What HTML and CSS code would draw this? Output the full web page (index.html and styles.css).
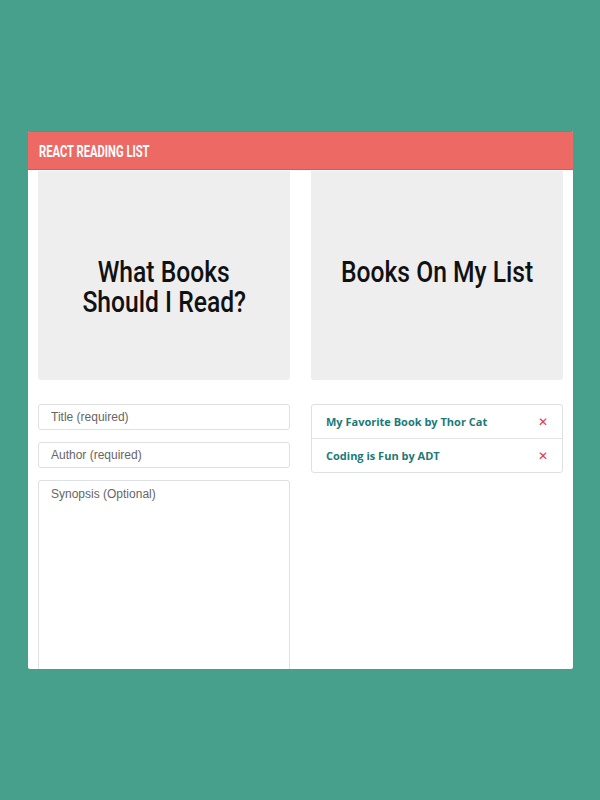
FILE: index.html
```html
<!DOCTYPE html>
<html>
<head>
<meta charset="utf-8">
<link rel="stylesheet" href="styles.css">
</head>
<body>
<div class="app">
  <header class="topbar"><span class="brand">REACT READING LIST</span></header>
  <div class="columns">
    <section class="col">
      <div class="hero"><h1><span>What Books</span><br><span>Should I Read?</span></h1></div>
      <form class="form">
        <input class="field" type="text" placeholder="Title (required)">
        <input class="field" type="text" placeholder="Author (required)">
        <textarea class="field area" placeholder="Synopsis (Optional)"></textarea>
      </form>
    </section>
    <section class="col">
      <div class="hero"><h1><span>Books On My List</span></h1></div>
      <ul class="list">
        <li class="item"><span>My Favorite Book by Thor Cat</span><span class="del">✕</span></li>
        <li class="item"><span>Coding is Fun by ADT</span><span class="del">✕</span></li>
      </ul>
    </section>
  </div>
</div>
</body>
</html>
```
FILE: styles.css
```css
html, body { margin: 0; padding: 0; }
body {
  background: #46a08c;
  height: 800px;
  overflow: hidden;
  font-family: "Liberation Sans", Arial, sans-serif;
}
.app {
  width: 545px;
  height: 538px;
  margin: 131px 0 0 28px;
  background: #fff;
  overflow: hidden;
  border-radius: 2px;
}
.topbar {
  height: 37px;
  background: #ec6964;
  border-top: 1px solid #e9524e;
  border-bottom: 1px solid #e9524e;
  padding-left: 11px;
}
.brand {
  display: inline-block;
  color: #fff;
  font-family: Roboto, "Liberation Sans", sans-serif;
  font-weight: bold;
  font-size: 16px;
  line-height: 40px;
  transform: scaleX(0.7);
  transform-origin: left center;
  white-space: nowrap;
}
.columns {
  display: grid;
  grid-template-columns: 252px 252px;
  column-gap: 21px;
  padding: 1px 10px 0;
}
.hero {
  box-sizing: border-box;
  height: 209px;
  background: #eeeeee;
  border-radius: 0 0 3px 3px;
  padding-top: 86px;
  margin-bottom: 24px;
}
.hero h1 {
  margin: 0;
  text-align: center;
  font-family: Roboto, "Liberation Sans", sans-serif;
  font-weight: 500;
  font-size: 29px;
  line-height: 30px;
  color: #111;
}
.hero h1 span {
  display: inline-block;
  transform: scaleX(0.85);
  white-space: nowrap;
}
.form {
  display: flex;
  flex-direction: column;
  gap: 12px;
  margin: 0;
}
.field {
  box-sizing: border-box;
  width: 252px;
  height: 26px;
  margin: 0;
  border: 1px solid #dfe0e4;
  border-radius: 3px;
  padding: 0 12px;
  font-family: "Liberation Sans", Arial, sans-serif;
  font-size: 12px;
  color: #555;
  outline: none;
  background: #fff;
}
.field::placeholder { color: #666; }
.area {
  height: 300px;
  padding-top: 6px;
  resize: none;
}
.list {
  list-style: none;
  margin: 0;
  padding: 0;
  border: 1px solid #dfe0e4;
  border-radius: 3px;
}
.item {
  height: 33px;
  display: flex;
  align-items: center;
  justify-content: space-between;
  padding: 0 14px 0 14px;
  font-family: "Open Sans", sans-serif;
  font-weight: bold;
  font-size: 11px;
  color: #1a7a78;
}
.item + .item { border-top: 1px solid #e3e4e6; }
.del {
  color: #e8383d;
  font-weight: normal;
  font-size: 12px;
}
```
